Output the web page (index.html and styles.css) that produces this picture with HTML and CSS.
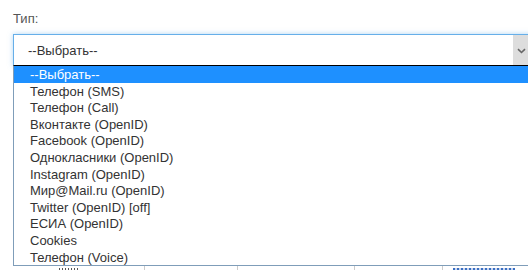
FILE: index.html
```html
<!DOCTYPE html>
<html>
<head>
<meta charset="utf-8">
<link rel="stylesheet" href="styles.css">
</head>
<body>
<div class="page">
  <div class="field">
    <label class="label">Тип:</label>
    <div class="select">
      <span class="value">--Выбрать--</span>
      <span class="arrow">
        <svg width="9" height="6" viewBox="0 0 9 6"><path d="M1 1.2 L4.5 4.5 L8 1.2" fill="none" stroke="#666" stroke-width="1.6"/></svg>
      </span>
      <ul class="dropdown">
        <li class="opt active">--Выбрать--</li>
        <li class="opt">Телефон (SMS)</li>
        <li class="opt">Телефон (Call)</li>
        <li class="opt">Вконтакте (OpenID)</li>
        <li class="opt">Facebook (OpenID)</li>
        <li class="opt">Однокласники (OpenID)</li>
        <li class="opt">Instagram (OpenID)</li>
        <li class="opt">Мир@Mail.ru (OpenID)</li>
        <li class="opt">Twitter (OpenID) [off]</li>
        <li class="opt">ЕСИА (OpenID)</li>
        <li class="opt">Cookies</li>
        <li class="opt">Телефон (Voice)</li>
      </ul>
    </div>
  </div>
  <div class="filler"></div>
  <div class="grid">
    <div class="cell c1"></div>
    <div class="cell c2"><span class="frag dark"></span></div>
    <div class="cell c3"></div>
    <div class="cell c4"></div>
    <div class="cell c5"></div>
    <div class="cell c6"><span class="frag blue"></span></div>
  </div>
</div>
</body>
</html>
```
FILE: styles.css
```css
html, body {
  margin: 0;
  padding: 0;
  background: #fff;
  overflow: hidden;
}
body {
  font-family: "Liberation Sans", Arial, sans-serif;
  font-size: 13px;
  color: #333;
  width: 528px;
  height: 270px;
}
.page {
  padding: 11px 0 0 13px;
}
.field {
  display: flex;
  flex-direction: column;
}
.label {
  color: #555;
  font-size: 13px;
  line-height: 16px;
  height: 16px;
  margin-bottom: 7px;
}
.select {
  position: relative;
  box-sizing: border-box;
  width: 530px;
  height: 32px;
  border: 1px solid #66afe9;
  box-shadow: 0 0 5px rgba(102,175,233,0.5);
  background: #fff;
  display: flex;
  align-items: center;
}
.value {
  padding-left: 14px;
  color: #333;
  line-height: 16px;
  margin-top: 1px;
}
.arrow {
  position: absolute;
  left: 499px;
  top: 0;
  bottom: 0;
  width: 16px;
  background: #dddddd;
  display: flex;
  align-items: center;
  justify-content: center;
}
.arrow svg {
  margin-top: 1px;
}
.dropdown {
  position: absolute;
  left: -1px;
  top: 30px;
  width: 530px;
  margin: 0;
  padding: 0;
  list-style: none;
  box-sizing: border-box;
  border: 1px solid #7f9db9;
  border-top: 1px solid #000;
  background: #fff;
  z-index: 5;
}
.opt {
  height: 16.6px;
  line-height: 17px;
  padding-left: 16px;
  color: #333;
  white-space: nowrap;
}
.opt.active {
  background: #1e90ff;
  color: #fff;
}
.filler {
  height: 199px;
}
.grid {
  display: flex;
  width: 515px;
  height: 10px;
  border-top: 1px solid #7a9cd3;
}
.cell {
  border-right: 1px solid #ccc;
  box-sizing: border-box;
  padding-top: 2px;
}
.c1 { width: 40px; border-right: none; }
.c2 { width: 92px; }
.c3 { width: 93px; }
.c4 { width: 117px; }
.c5 { width: 88px; }
.c6 { flex: 1; border-right: none; padding-left: 10px; }
.frag {
  display: block;
  height: 3px;
}
.frag.dark {
  width: 20px;
  margin-left: 6px;
  background: repeating-linear-gradient(90deg, #555 0 1px, transparent 1px 3px);
}
.frag.blue {
  width: 62px;
  background: repeating-linear-gradient(90deg, #3a6fc4 0 2px, #c9d6ee 2px 4px);
}
```
